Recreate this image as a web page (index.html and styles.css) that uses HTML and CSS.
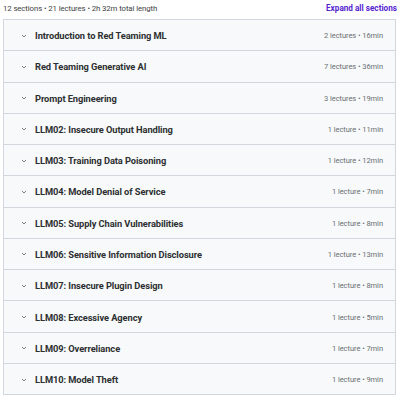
FILE: index.html
```html
<!DOCTYPE html>
<html>
<head>
<meta charset="utf-8">
<link rel="stylesheet" href="styles.css">
</head>
<body>
<div class="curriculum">
  <div class="summary">
    <span class="stats">12 sections • 21 lectures • 2h 32m total length</span>
    <span class="expand">Expand all sections</span>
  </div>
  <div class="panel">
    <div class="row"><span class="chev"><svg viewBox="0 0 6 4"><path d="M1 1 L3 3 L5 1"/></svg></span><span class="title">Introduction to Red Teaming ML</span><span class="meta">2 lectures • 16min</span></div>
    <div class="row"><span class="chev"><svg viewBox="0 0 6 4"><path d="M1 1 L3 3 L5 1"/></svg></span><span class="title">Red Teaming Generative AI</span><span class="meta">7 lectures • 36min</span></div>
    <div class="row"><span class="chev"><svg viewBox="0 0 6 4"><path d="M1 1 L3 3 L5 1"/></svg></span><span class="title">Prompt Engineering</span><span class="meta">3 lectures • 19min</span></div>
    <div class="row"><span class="chev"><svg viewBox="0 0 6 4"><path d="M1 1 L3 3 L5 1"/></svg></span><span class="title">LLM02: Insecure Output Handling</span><span class="meta">1 lecture • 11min</span></div>
    <div class="row"><span class="chev"><svg viewBox="0 0 6 4"><path d="M1 1 L3 3 L5 1"/></svg></span><span class="title">LLM03: Training Data Poisoning</span><span class="meta">1 lecture • 12min</span></div>
    <div class="row"><span class="chev"><svg viewBox="0 0 6 4"><path d="M1 1 L3 3 L5 1"/></svg></span><span class="title">LLM04: Model Denial of Service</span><span class="meta">1 lecture • 7min</span></div>
    <div class="row"><span class="chev"><svg viewBox="0 0 6 4"><path d="M1 1 L3 3 L5 1"/></svg></span><span class="title">LLM05: Supply Chain Vulnerabilities</span><span class="meta">1 lecture • 8min</span></div>
    <div class="row"><span class="chev"><svg viewBox="0 0 6 4"><path d="M1 1 L3 3 L5 1"/></svg></span><span class="title">LLM06: Sensitive Information Disclosure</span><span class="meta">1 lecture • 13min</span></div>
    <div class="row"><span class="chev"><svg viewBox="0 0 6 4"><path d="M1 1 L3 3 L5 1"/></svg></span><span class="title">LLM07: Insecure Plugin Design</span><span class="meta">1 lecture • 8min</span></div>
    <div class="row"><span class="chev"><svg viewBox="0 0 6 4"><path d="M1 1 L3 3 L5 1"/></svg></span><span class="title">LLM08: Excessive Agency</span><span class="meta">1 lecture • 5min</span></div>
    <div class="row"><span class="chev"><svg viewBox="0 0 6 4"><path d="M1 1 L3 3 L5 1"/></svg></span><span class="title">LLM09: Overreliance</span><span class="meta">1 lecture • 7min</span></div>
    <div class="row"><span class="chev"><svg viewBox="0 0 6 4"><path d="M1 1 L3 3 L5 1"/></svg></span><span class="title">LLM10: Model Theft</span><span class="meta">1 lecture • 9min</span></div>
  </div>
</div>
</body>
</html>
```

FILE: styles.css
```css
html, body {
  margin: 0;
  padding: 0;
  background: #ffffff;
}
body {
  font-family: Roboto, "Noto Sans", sans-serif;
  color: #2d2f31;
}
.curriculum {
  padding: 1px 3px 0 3px;
}
.summary {
  display: flex;
  justify-content: space-between;
  align-items: center;
  height: 14px;
  margin-bottom: 4px;
}
.stats {
  font-size: 7.8px;
  color: #3e4143;
  letter-spacing: -0.1px;
}
.expand {
  font-size: 8.2px;
  font-weight: 700;
  color: #5624d0;
}
.panel {
  border: 1px solid #d1d7dc;
  border-bottom: none;
  margin-right: 1px;
}
.row {
  display: flex;
  align-items: center;
  height: 29.27px;
  padding-top: 1px;
  border-bottom: 1px solid #d1d7dc;
  background: #f7f9fa;
  padding-left: 17px;
  padding-right: 12px;
}
.chev {
  width: 6px;
  height: 4px;
  margin-right: 8px;
  display: flex;
}
.chev svg {
  width: 6px;
  height: 4px;
  fill: none;
  stroke: #6a6f73;
  stroke-width: 0.9;
}
.title {
  flex: 1;
  font-size: 9.3px;
  font-weight: 700;
  color: #2d2f31;
  letter-spacing: -0.08px;
}
.meta {
  font-size: 7.5px;
  color: #6a6f73;
  letter-spacing: -0.05px;
}
```
